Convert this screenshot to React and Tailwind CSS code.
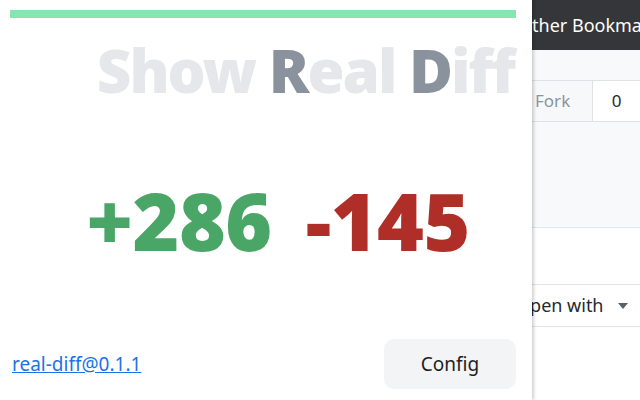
export default function App() {
  return (
    <div className="flex w-[640px] h-[400px] overflow-hidden bg-white" style={{ fontFamily: '"Noto Sans", sans-serif' }}>
      {/* popup */}
      <div className="relative z-10 flex w-[532px] shrink-0 flex-col bg-white pl-[10px] pr-[16px] pt-[10px] shadow-[2px_0_3px_rgba(0,0,0,0.18)]">
        <div className="h-[8px] w-full bg-[#86e5b1]" />
        <div className="mt-[22px] flex justify-end pr-[2px]">
          <h1 className="text-[60px] font-black leading-none tracking-[-2px] text-[#e5e7eb]">
            Show <span className="text-[#8a929d]">R</span>eal <span className="text-[#8a929d]">D</span>iff
          </h1>
        </div>
        <div className="mt-[80px] flex justify-center gap-[34px] pl-[30px] text-[80px] font-black leading-none tracking-[-0.5px]">
          <span className="text-[#4aa667]">+286</span>
          <span className="text-[#b02e28]">-145</span>
        </div>
        <div className="mt-auto mb-[11px] flex items-center justify-between pl-[2px]">
          <a href="#" className="text-[19px] text-[#1a73e8] underline">real-diff@0.1.1</a>
          <button className="h-[50px] w-[132px] rounded-[10px] bg-[#f3f4f6] text-[19px] text-[#1f1f1f]">Config</button>
        </div>
      </div>
      {/* page behind */}
      <div className="flex flex-1 flex-col overflow-hidden bg-[#f8f9fa]">
        <div className="flex h-[50px] items-center whitespace-nowrap bg-[#35363a] text-[18px] text-white">
          <span className="-ml-[14px]">Other Bookmarks</span>
        </div>
        <div className="mt-[30px] flex h-[42px] border-y border-[#dfe2e5] whitespace-nowrap text-[17px]">
          <div className="flex w-[63px] items-center bg-[#f6f8fa] pl-[3px] text-[#8b949e]">Fork</div>
          <div className="flex w-[50px] items-center border-l border-[#dfe2e5] bg-white pl-[19px] text-[#24292e]">0</div>
        </div>
        <div className="h-[105px]" />
        <div className="h-[57px] border-t border-[#e1e4e8] bg-white" />
        <div className="flex h-[43px] items-center gap-[14px] border-y border-[#e1e4e8] bg-white whitespace-nowrap text-[18px] text-[#24292e]">
          <span className="-ml-[16px]">Open with</span>
          <svg width="10" height="6" viewBox="0 0 10 6"><path d="M0 0h10L5 6z" fill="#586069" /></svg>
        </div>
        <div className="flex-1 bg-white" />
      </div>
    </div>
  );
}
